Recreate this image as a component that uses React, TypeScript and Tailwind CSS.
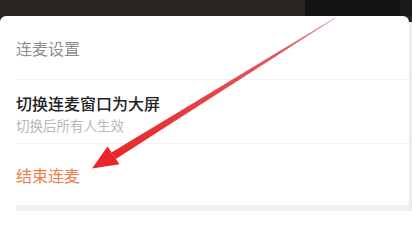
import React from "react";

const cjk = { fontFamily: '"Noto Sans CJK SC", "Noto Sans", sans-serif' };

function Arrow() {
  // annotation arrow drawn over the sheet
  return (
    <svg className="absolute inset-0 pointer-events-none" width="412" height="211" viewBox="0 0 412 211">
      <defs>
        <linearGradient id="shaft" x1="335" y1="18" x2="113" y2="155" gradientUnits="userSpaceOnUse">
          <stop offset="0" stopColor="#c9a9ad" />
          <stop offset="0.25" stopColor="#e25a5c" />
          <stop offset="1" stopColor="#e8262a" />
        </linearGradient>
      </defs>
      <polygon points="335.3,18.3 334.7,17.7 111.4,152.5 115.8,159.0" fill="url(#shaft)" />
      <polygon points="92,168.5 107.5,146.5 119.5,164.2" fill="#e8262a" />
    </svg>
  );
}

export default function App() {
  return (
    <div className="relative w-[412px] h-[211px] overflow-hidden bg-[#2a2521] flex flex-col" style={cjk}>
      <div className="h-4 flex shrink-0">
        <div className="flex-1" />
        <div className="w-[95px] bg-[#141414]" />
        <div className="w-[12px] bg-[#1c1a18]" />
      </div>
      <div className="flex-1 flex">
        <div className="flex-1 bg-white rounded-t-md flex flex-col">
          <div className="h-16 ml-4 flex items-center border-b border-[#f0f0f0]">
            <span className="text-[16px] text-[#8e8e8e]">连麦设置</span>
          </div>
          <div className="h-16 ml-4 pt-[2px] flex flex-col justify-center gap-[4px] border-b border-[#f0f0f0]">
            <span className="text-[16px] leading-5 font-medium text-[#222]">切换连麦窗口为大屏</span>
            <span className="text-[13.5px] leading-4 text-[#b8b8b8]">切换后所有人生效</span>
          </div>
          <div className="h-[61px] ml-4 flex items-center">
            <span className="text-[16px] text-[#f27a4c]">结束连麦</span>
          </div>
          <div className="flex-1 ml-4 bg-[#f1f1f1]" />
        </div>
        <div className="w-[3px] mt-[6px] bg-[#ececec]" />
      </div>
      <Arrow />
    </div>
  );
}
